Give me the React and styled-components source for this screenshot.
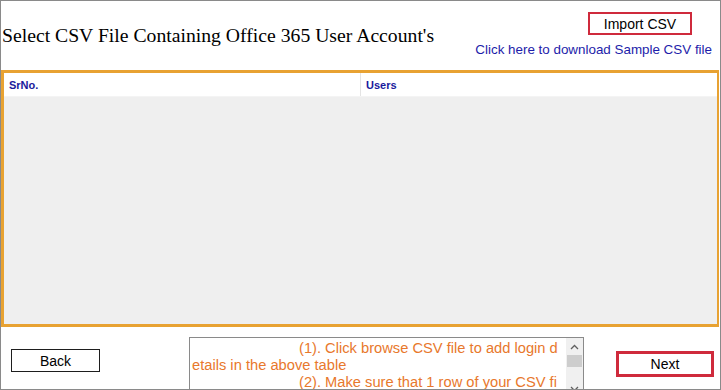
import React from "react";
import styled, { createGlobalStyle } from "styled-components";

const Global = createGlobalStyle`
  html, body { margin: 0; padding: 0; background: #fff; }
  * { box-sizing: border-box; }
`;

const Window = styled.div`
  width: 721px;
  height: 390px;
  border: 1px solid #8a8a8a;
  background: #fff;
  display: flex;
  flex-direction: column;
  overflow: hidden;
  font-family: "Liberation Sans", Arial, sans-serif;
`;

const Header = styled.div`
  height: 69px;
  flex-shrink: 0;
  display: flex;
  justify-content: space-between;
  align-items: flex-start;
`;

const Title = styled.h1`
  margin: 0;
  padding: 22px 0 0 1px;
  font-family: "Liberation Serif", "Times New Roman", serif;
  font-weight: normal;
  font-size: 19.7px;
  line-height: 24px;
  color: #000;
  white-space: nowrap;
`;

const HeaderActions = styled.div`
  display: flex;
  flex-direction: column;
  align-items: flex-end;
  padding: 11px 8px 0 0;
  gap: 7px;
`;

const RedButton = styled.button`
  width: ${(p) => p.$w}px;
  height: ${(p) => p.$h}px;
  margin: ${(p) => p.$margin || "0"};
  border: ${(p) => p.$bw || 2}px solid #cf2a3c;
  background: #fff;
  font-family: "Liberation Sans", Arial, sans-serif;
  font-size: 14px;
  color: #000;
  padding: 0;
  display: flex;
  align-items: center;
  justify-content: center;
  flex-shrink: 0;
`;

const PlainButton = styled.button`
  width: 89px;
  height: 23px;
  margin-top: 22px;
  margin-left: 10px;
  border: 1px solid #1e1e1e;
  background: #fff;
  font-family: "Liberation Sans", Arial, sans-serif;
  font-size: 14px;
  color: #000;
  padding: 0;
  flex-shrink: 0;
`;

const Link = styled.a`
  font-size: 13.4px;
  color: #1d1daa;
  text-decoration: none;
  line-height: 16px;
  white-space: nowrap;
`;

const Table = styled.div`
  height: 257px;
  flex-shrink: 0;
  margin: 0 1px 0 0;
  border: 3px solid #e8a232;
  border-right-width: 2px;
  background: #efefef;
  display: flex;
  flex-direction: column;
`;

const HeadRow = styled.div`
  height: 24px;
  background: #fff;
  display: grid;
  grid-template-columns: 357px 1fr;
  border-bottom: 1px solid #f4f4f4;
`;

const HeadCell = styled.div`
  font-family: "Liberation Sans", Arial, sans-serif;
  font-weight: bold;
  font-size: 11px;
  color: #1a1a9c;
  padding-left: 5px;
  display: flex;
  align-items: center;
  border-right: ${(p) => (p.$divider ? "1px solid #e4e4e4" : "none")};
`;

const Footer = styled.div`
  flex: 1;
  min-height: 0;
  overflow: hidden;
  display: flex;
  align-items: flex-start;
`;

const InfoBox = styled.div`
  width: 395px;
  height: 60px;
  margin: 10px 0 0 89px;
  border: 1px solid #8a8a8a;
  border-bottom: none;
  display: flex;
  flex-shrink: 0;
`;

const InfoText = styled.div`
  flex: 1;
  padding: 2px 0 0 2px;
  font-size: 14.7px;
  line-height: 17px;
  color: #e8782c;
  white-space: nowrap;
  overflow: hidden;
`;

const InfoLine = styled.div`
  padding-left: ${(p) => p.$indent || 0}px;
`;

const ScrollBar = styled.div`
  width: 17px;
  background: #f0f0f0;
  display: flex;
  flex-direction: column;
  align-items: center;
`;

const Arrow = styled.div`
  height: 17px;
  width: 17px;
  display: flex;
  align-items: center;
  justify-content: center;
`;

const Thumb = styled.div`
  width: 15px;
  height: 12px;
  background: #cdcdcd;
`;

const Track = styled.div`
  flex: 1;
`;

const Chevron = ({ up }) => (
  <svg width="9" height="6" viewBox="0 0 9 6">
    <path
      d={up ? "M1 5 L4.5 1.5 L8 5" : "M1 1 L4.5 4.5 L8 1"}
      fill="none"
      stroke="#606060"
      strokeWidth="1.3"
    />
  </svg>
);

export default function App() {
  return (
    <>
      <Global />
      <Window>
        <Header>
          <Title>Select CSV File Containing Office 365 User Account's</Title>
          <HeaderActions>
            <RedButton $w={104} $h={23} $margin="0 20px 0 0">
              Import CSV
            </RedButton>
            <Link href="#">Click here to download Sample CSV file</Link>
          </HeaderActions>
        </Header>
        <Table>
          <HeadRow>
            <HeadCell $divider>SrNo.</HeadCell>
            <HeadCell>Users</HeadCell>
          </HeadRow>
        </Table>
        <Footer>
          <PlainButton>Back</PlainButton>
          <InfoBox>
            <InfoText>
              <InfoLine $indent={107}>(1). Click browse CSV file to add login d</InfoLine>
              <InfoLine>etails in the above table</InfoLine>
              <InfoLine $indent={107}>(2). Make sure that 1 row of your CSV fi</InfoLine>
            </InfoText>
            <ScrollBar>
              <Arrow>
                <Chevron up />
              </Arrow>
              <Thumb />
              <Track />
              <Arrow>
                <Chevron />
              </Arrow>
            </ScrollBar>
          </InfoBox>
          <RedButton $w={98} $h={26} $bw={3} $margin="24px 0 0 32px">
            Next
          </RedButton>
        </Footer>
      </Window>
    </>
  );
}
